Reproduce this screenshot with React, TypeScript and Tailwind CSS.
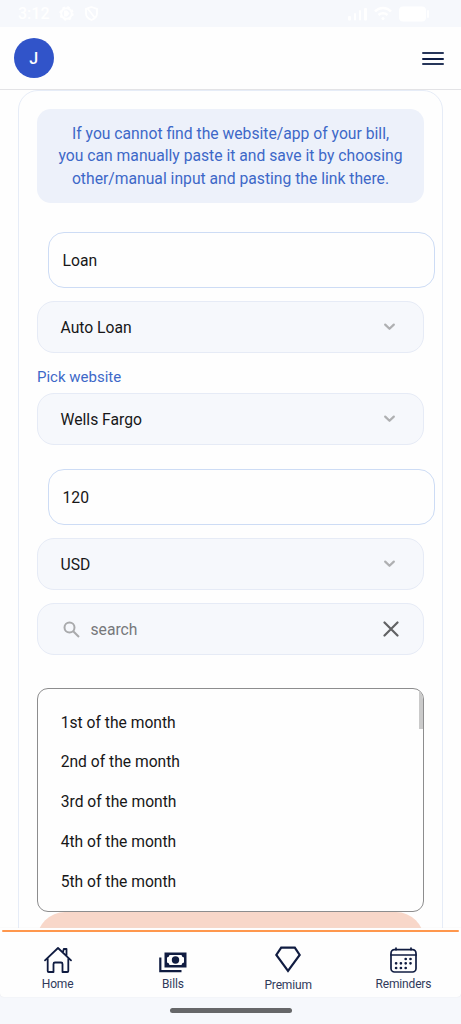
import React from "react";

const days = ["1st of the month", "2nd of the month", "3rd of the month", "4th of the month", "5th of the month"];

const StatusBar: React.FC = () => (
  <div className="h-[27px] shrink-0 bg-[#f6f8fc] flex items-center justify-between pl-[18px] pr-[32px] text-white">
    <div className="flex items-center">
      <span className="w-[32px] text-[16px] leading-[26px] font-medium">3:12</span>
      <svg className="ml-[9px]" width="15" height="15" viewBox="0 0 15 15" fill="none" stroke="currentColor">
        <circle cx="7.5" cy="7.5" r="5.3" strokeWidth="2" />
        <circle cx="7.5" cy="7.5" r="6.5" strokeWidth="1.4" strokeDasharray="2.6 2.5" />
        <path d="M5 4.500h3l2.500 3L8 10.500H5z" fill="currentColor" stroke="none" />
      </svg>
      <svg className="ml-[11px]" width="13" height="15" viewBox="0 0 13 15" fill="none" stroke="currentColor" strokeWidth="1.8">
        <path d="M6.5 1L12 3v4.5c0 3-2.3 5.2-5.5 6.5C3.300 12.700 1 10.500 1 7.500V3zM3 3l7 9" />
      </svg>
    </div>
    <div className="flex items-center">
      <svg width="19" height="14" viewBox="0 0 19 14" fill="currentColor">
        <rect x="0" y="9" width="3" height="4.500" rx="1" />
        <rect x="6" y="6" width="2" height="7.500" rx="1" />
        <rect x="11" y="3" width="2" height="10.500" rx="1" />
        <rect x="16" y="1" width="3" height="12.500" rx="1" />
      </svg>
      <svg className="ml-[7px]" width="18" height="15" viewBox="0 0 18 15" fill="none" stroke="currentColor" strokeWidth="2.500">
        <path d="M1 5.500C5.500.800 12.500.800 17 5.500M4.500 9C7 6.800 11 6.800 13.500 9" />
        <circle cx="9" cy="12.500" r="1.500" fill="currentColor" stroke="none" />
      </svg>
      <svg className="ml-[7px]" width="30" height="16" viewBox="0 0 30 16" fill="currentColor">
        <rect width="27" height="15" y=".5" rx="4" />
        <rect x="28" y="4" width="2" height="8" rx="1" />
      </svg>
    </div>
  </div>
);

const Header: React.FC = () => (
  <header className="h-[63px] shrink-0 bg-[#fefefe] border-b border-[#e3e3e6] flex items-center justify-between pl-[13.500px] pr-[17px]">
    <div className="w-[40.500px] h-[40.500px] rounded-full bg-[#3154c9] text-white text-[16px] font-medium flex items-center justify-center pt-px">J</div>
    <button className="flex flex-col gap-[3.500px] pt-px">
      <span className="block w-[22px] h-[2px] rounded-full bg-[#27365a]" />
      <span className="block w-[22px] h-[2px] rounded-full bg-[#0f1e45]" />
      <span className="block w-[22px] h-[2px] rounded-full bg-[#27365a]" />
    </button>
  </header>
);

const TextField: React.FC<{ value: string }> = ({ value }) => (
  <div className="ml-[11px] -mr-[11px] h-[56px] shrink-0 rounded-[16px] border border-[#cddcf5] bg-[#fefefe] flex items-center pl-[13.500px] pt-px">
    {value}
  </div>
);

const SelectField: React.FC<{ value: string }> = ({ value }) => (
  <div className="h-[52px] shrink-0 rounded-[17px] border border-[#e6ebf6] bg-[#f6f8fc] flex items-center justify-between pl-[22.500px] pr-[28px]">
    <span>{value}</span>
    <svg width="11" height="8" viewBox="0 0 11 8" fill="none" stroke="#afb0b2" strokeWidth="2.200" strokeLinecap="round" strokeLinejoin="round">
      <path d="M1.200 1.600l4.300 4.200 4.300-4.200" />
    </svg>
  </div>
);

const HomeIcon = () => (
  <svg width="28" height="26" viewBox="0 0 28 26" fill="none" stroke="#101c41" strokeWidth="1.800" strokeLinecap="round" strokeLinejoin="round">
    <path d="M1 13.300L14 1l13 12.300M3.700 11.500V24c0 .6.400 1 1 1h4.800v-8c0-1 .5-1.500 1.500-1.500h6c1 0 1.500.5 1.500 1.500v8h4.800c.6 0 1-.4 1-1V11.500M19 5l.8-3h2.700v7" />
  </svg>
);

const BillsIcon = () => (
  <svg width="28" height="21" viewBox="0 0 28 21" fill="none">
    <path d="M1.300 5.500v13.700h21.200" stroke="#101c41" strokeWidth="2.200" />
    <path fillRule="evenodd" fill="#101c41" d="M5.500.5h22v15h-22zM10.500 3a3 3 0 01-2.500 2.500v5a3 3 0 012.500 2.500h12a3 3 0 012.500-2.500v-5A3 3 0 0122.500 3z" />
    <circle cx="16.500" cy="8" r="3.700" fill="#101c41" />
  </svg>
);

const PremiumIcon = () => (
  <svg width="26" height="27" viewBox="0 0 26 27" fill="none" stroke="#101c41" strokeWidth="2.200">
    <path d="M6.200 1.700h13.600l4.900 7.300L13 25 1.300 9z" />
  </svg>
);

const RemindersIcon = () => (
  <svg width="27" height="26" viewBox="0 0 27 26" fill="none" stroke="#101c41" strokeWidth="1.700" strokeLinecap="round">
    <rect x="1" y="2.700" width="25" height="22.300" rx="3.500" />
    <path d="M1 8h25M6 1v1.700M21 1v1.700" />
    <g strokeWidth="2.700">
      <path d="M15.700 12h.01M20.500 12h.01M6.100 16.300h.01M10.900 16.300h.01M15.700 16.300h.01M20.500 16.300h.01M6.100 21h.01M10.900 21h.01M15.700 21h.01" />
    </g>
  </svg>
);

const tabs = [
  { label: "Home", icon: <HomeIcon /> },
  { label: "Bills", icon: <BillsIcon /> },
  { label: "Premium", icon: <PremiumIcon /> },
  { label: "Reminders", icon: <RemindersIcon /> },
];

const BottomNav: React.FC = () => (
  <div className="h-[96px] shrink-0 bg-[#f6f8fc]">
    <nav className="h-[69px] bg-[#fefefe] rounded-b-[4px] pt-[2px] shadow-[0_0_1px_#dcdde0]">
      <div className="mx-[2px] h-[1.500px] rounded-full bg-[#ff974d]" />
      <div className="grid grid-cols-4 h-[65px] text-[12px] tracking-[-0.15px] leading-[14px] text-[#303a5b]">
        {tabs.map((tab) => (
          <div key={tab.label} className="flex flex-col items-center">
            <div className="h-[41px] flex items-end">{tab.icon}</div>
            <span className={tab.label === "Premium" ? "mt-[5px]" : "mt-[4px]"}>{tab.label}</span>
          </div>
        ))}
      </div>
    </nav>
    <div className="h-[27px] flex items-center justify-center">
      <div className="w-[122px] h-[5px] rounded-full bg-[#666769]" />
    </div>
  </div>
);

export default function App() {
  return (
    <div className="w-full h-[1024px] overflow-hidden flex flex-col bg-[#fefefe] text-[#171718] text-[15.700px] leading-[23px] font-[Roboto,sans-serif]">
      <StatusBar />
      <Header />
      <main className="flex-1 min-h-0 overflow-hidden">
        <div className="ml-[18px] mr-[18px] h-[900px] rounded-[20px] border border-[#e6ecf7] px-[18px] pt-[18px] flex flex-col">
          <div className="h-[94px] shrink-0 rounded-[14px] bg-[#edf1fa] text-[#3d68c8] text-center pt-[13.700px] leading-[22.700px]">
            If you cannot find the website/app of your bill,
            <br />
            you can manually paste it and save it by choosing
            <br />
            other/manual input and pasting the link there.
          </div>
          <div className="flex flex-col gap-[13px] mt-[29px]">
            <TextField value="Loan" />
            <SelectField value="Auto Loan" />
          </div>
          <label className="h-[40px] shrink-0 pt-[13px] text-[15px] text-[#3d68c8]">Pick website</label>
          <SelectField value="Wells Fargo" />
          <div className="flex flex-col gap-[13px] mt-[24px]">
            <TextField value="120" />
            <SelectField value="USD" />
            <div className="h-[52px] shrink-0 rounded-[17px] border border-[#e6ebf6] bg-[#f6f8fc] flex items-center pl-[25px] pr-[24.500px]">
              <svg width="17" height="17" viewBox="0 0 17 17" fill="none" stroke="#a9aaac" strokeWidth="2">
                <circle cx="6.500" cy="6.500" r="5" />
                <path d="M10.200 10.200l5.800 5.800" />
              </svg>
              <span className="ml-[10.500px] flex-1 text-[#77787b]">search</span>
              <svg width="16" height="16" viewBox="0 0 16 16" stroke="#616264" strokeWidth="2.200" strokeLinecap="round">
                <path d="M1.500 1.500l13 13M14.500 1.500l-13 13" />
              </svg>
            </div>
          </div>
          <div className="relative z-10 mt-[33px] h-[224px] shrink-0 overflow-hidden rounded-[11px] border border-[#8d8d8e] bg-[#fefefe] pt-[13.200px] pl-[22.700px] text-[15.650px]">
            {days.map((day) => (
              <div key={day} className="h-[39.750px] flex items-center">{day}</div>
            ))}
            <div className="absolute right-0 top-0 w-[4px] h-[40px] bg-[#cacaca]" />
          </div>
          <div className="h-[56px] shrink-0 rounded-[28px] bg-[#f8d7c9]" />
        </div>
      </main>
      <BottomNav />
    </div>
  );
}
